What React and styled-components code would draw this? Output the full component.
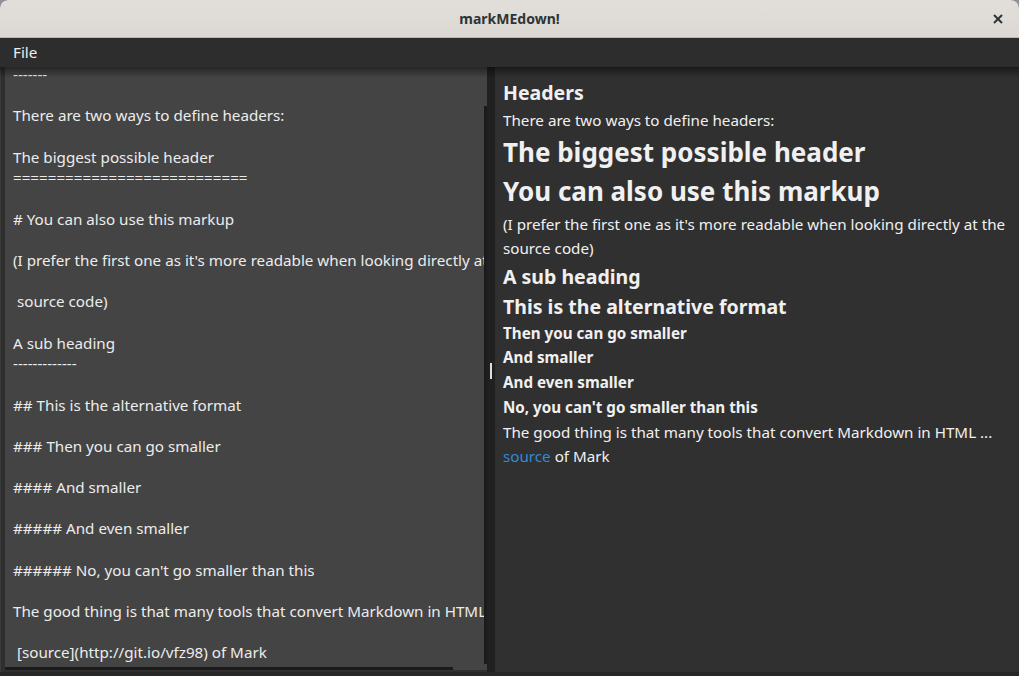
import styled, { createGlobalStyle } from 'styled-components';

const GlobalStyle = createGlobalStyle`
  html, body {
    margin: 0;
    padding: 0;
    background: #8e9399;
  }
  body {
    font-family: "Noto Sans", "Open Sans", sans-serif;
  }
`;

// raw markdown as it sits in the editor (scrolled a little)
const source = [
  '-------',
  '',
  'There are two ways to define headers:',
  '',
  'The biggest possible header',
  '===========================',
  '',
  '# You can also use this markup',
  '',
  "(I prefer the first one as it's more readable when looking directly at the",
  '',
  ' source code)',
  '',
  'A sub heading',
  '-------------',
  '',
  '## This is the alternative format',
  '',
  '### Then you can go smaller',
  '',
  '#### And smaller',
  '',
  '##### And even smaller',
  '',
  "###### No, you can't go smaller than this",
  '',
  'The good thing is that many tools that convert Markdown in HTML ...',
  '',
  ' [source](http://git.io/vfz98) of Mark',
];

const App = () => {
  return (
    <>
      <GlobalStyle />
      <Window>
        <TitleBar>
          <span />
          <Title>markMEdown!</Title>
          <CloseButton>
            <svg width="10" height="10" viewBox="0 0 10 10">
              <line x1="1" y1="1" x2="9" y2="9" stroke="currentColor" strokeWidth="2" />
              <line x1="9" y1="1" x2="1" y2="9" stroke="currentColor" strokeWidth="2" />
            </svg>
          </CloseButton>
        </TitleBar>
        <MenuBar>
          <MenuItem>File</MenuItem>
        </MenuBar>
        <Main>
          <LeftPane>
            <Editor>
              <EditorText>
                {source.map((line, i) => (
                  <EditorLine key={i}>{line || '\u00a0'}</EditorLine>
                ))}
              </EditorText>
              <VScroll />
              <HScroll />
            </Editor>
          </LeftPane>
          <Divider>
            <Grip />
          </Divider>
          <Preview>
            <Heading size={19.5} lh={30}>Headers</Heading>
            <Para>There are two ways to define headers:</Para>
            <Heading size={26} lh={39.5}>The biggest possible header</Heading>
            <Heading size={26} lh={39.5}>You can also use this markup</Heading>
            <Para>(I prefer the first one as it's more readable when looking directly at the source code)</Para>
            <Heading size={19.5} lh={32}>A sub heading</Heading>
            <Heading size={19.5} lh={28}>This is the alternative format</Heading>
            <Heading size={15.2} lh={24.8}>Then you can go smaller</Heading>
            <Heading size={15.2} lh={24.8}>And smaller</Heading>
            <Heading size={15.2} lh={24.8}>And even smaller</Heading>
            <Heading size={15.2} lh={24.8}>No, you can't go smaller than this</Heading>
            <Para>The good thing is that many tools that convert Markdown in HTML ...</Para>
            <Para><Link>source</Link> of Mark</Para>
          </Preview>
        </Main>
      </Window>
    </>
  );
};

const Window = styled.div`
  width: 1019px;
  height: 676px;
  display: flex;
  flex-direction: column;
  border-radius: 8px 8px 0 0;
  overflow: hidden;
  background: #262626;
  padding-bottom: 4px;
  box-sizing: border-box;
`;
const TitleBar = styled.div`
  flex: none;
  height: 37px;
  display: grid;
  grid-template-columns: 1fr auto 1fr;
  align-items: center;
  background: linear-gradient(#e2dfdb, #dcd8d4);
  border-bottom: 1px solid #bdb8b3;
  color: #2e3436;
`;
const Title = styled.div`
  font-size: 14px;
  font-weight: 700;
`;
const CloseButton = styled.div`
  justify-self: end;
  margin-right: 16px;
  display: flex;
  color: #2e3436;
`;
const MenuBar = styled.div`
  flex: none;
  height: 29px;
  display: flex;
  align-items: center;
  padding: 0 0 2px 13px;
  box-sizing: border-box;
  background: #2d2d2d;
`;
const MenuItem = styled.div`
  font-size: 15.2px;
  color: #eeeeee;
`;
const Main = styled.div`
  flex: 1;
  display: flex;
  min-height: 0;
  position: relative;
  &::before {
    content: '';
    position: absolute;
    left: 0;
    right: 0;
    top: 0;
    height: 11px;
    background: linear-gradient(rgba(0, 0, 0, 0.45), rgba(0, 0, 0, 0));
    z-index: 3;
    pointer-events: none;
  }
`;
const LeftPane = styled.div`
  width: 487px;
  flex: none;
  display: flex;
  padding: 0 0 2px 4px;
  box-sizing: border-box;
  background: #2f2f2f;
  border-left: 1px solid #3b3b3b;
`;
const Editor = styled.div`
  flex: 1;
  position: relative;
  overflow: hidden;
  background: #444444;
`;
const EditorText = styled.div`
  margin-top: -3px;
  padding-left: 8px;
  font-size: 15.2px;
  line-height: 20.65px;
  color: #ececec;
  white-space: pre;
`;
const EditorLine = styled.div``;
const VScroll = styled.div`
  position: absolute;
  right: 0;
  top: 39px;
  width: 3px;
  height: 558px;
  background: #1b1b1b;
`;
const HScroll = styled.div`
  position: absolute;
  left: 0;
  bottom: 0;
  width: 448px;
  height: 3px;
  background: #1b1b1b;
`;
const Divider = styled.div`
  flex: none;
  width: 8px;
  display: flex;
  align-items: center;
  justify-content: center;
  background: #202020;
`;
const Grip = styled.div`
  width: 2px;
  height: 16px;
  margin-top: 3px;
  background: #dddddd;
`;
const Preview = styled.div`
  flex: 1;
  padding: 11px 8px 8px;
  background: #303030;
  color: #f0f0f0;
`;
const Heading = styled.div`
  font-size: ${(p) => p.size}px;
  line-height: ${(p) => p.lh}px;
  font-weight: 700;
`;
const Para = styled.div`
  font-size: 15.2px;
  line-height: 24.5px;
`;
const Link = styled.span`
  color: #2f8ad8;
`;

export default App;
